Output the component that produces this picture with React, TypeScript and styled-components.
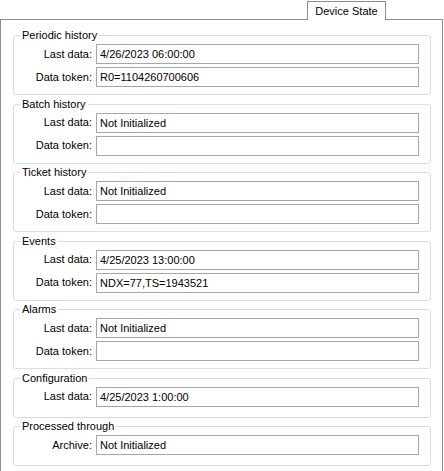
import React from "react";
import styled, { createGlobalStyle } from "styled-components";

const GlobalStyle = createGlobalStyle`
  html, body {
    margin: 0;
    padding: 0;
    background: #ffffff;
    overflow: hidden;
  }
  body {
    font-family: "Liberation Sans", Arial, sans-serif;
    font-size: 11px;
    color: #000000;
  }
`;

const Window = styled.div`
  width: 444px;
  height: 471px;
  display: flex;
  flex-direction: column;
  background: #ffffff;
`;

const TabStrip = styled.div`
  display: flex;
  justify-content: flex-end;
  padding: 1px 58px 0 0;
`;

const Tab = styled.div`
  position: relative;
  z-index: 1;
  box-sizing: border-box;
  width: 79px;
  height: 19px;
  margin-bottom: -1px;
  border: 1px solid #8d8d8d;
  border-bottom: none;
  background: #ffffff;
  display: flex;
  align-items: center;
  justify-content: center;
  line-height: 13px;
  padding-top: 1px;
`;

const TabPage = styled.div`
  flex: 1;
  margin-right: 1px;
  border: 1px solid #8d8d8d;
  border-bottom: none;
  padding: 9px 11px 0 12px;
  display: flex;
  flex-direction: column;
`;

const Group = styled.fieldset<{ $rows: number }>`
  margin: 0 0 2.5px 0;
  padding: 2px 11px ${(p) => (p.$rows === 1 ? 10 : 7)}px 0;
  border: 1px solid #dcdcdc;
  border-radius: 3px;
  display: flex;
  flex-direction: column;
  gap: 3px;
  min-width: 0;
`;

const Caption = styled.legend`
  margin-left: 6px;
  padding: 0 2px;
  line-height: 13px;
  font-size: 11px;
`;

const Row = styled.div`
  display: grid;
  grid-template-columns: 78px 1fr;
  column-gap: 4px;
  align-items: center;
`;

const FieldLabel = styled.label`
  text-align: right;
  line-height: 13px;
  white-space: nowrap;
`;

const Field = styled.input`
  box-sizing: border-box;
  width: 100%;
  height: 20px;
  margin: 0;
  padding: 0 3px;
  border: 1px solid #a6a6a6;
  border-radius: 0;
  background: #ffffff;
  font-family: inherit;
  font-size: 11px;
  color: #000000;
  outline: none;
`;

type FieldDef = { label: string; value: string };
type GroupDef = { title: string; fields: FieldDef[] };

const groups: GroupDef[] = [
  {
    title: "Periodic history",
    fields: [
      { label: "Last data:", value: "4/26/2023 06:00:00" },
      { label: "Data token:", value: "R0=1104260700606" },
    ],
  },
  {
    title: "Batch history",
    fields: [
      { label: "Last data:", value: "Not Initialized" },
      { label: "Data token:", value: "" },
    ],
  },
  {
    title: "Ticket history",
    fields: [
      { label: "Last data:", value: "Not Initialized" },
      { label: "Data token:", value: "" },
    ],
  },
  {
    title: "Events",
    fields: [
      { label: "Last data:", value: "4/25/2023 13:00:00" },
      { label: "Data token:", value: "NDX=77,TS=1943521" },
    ],
  },
  {
    title: "Alarms",
    fields: [
      { label: "Last data:", value: "Not Initialized" },
      { label: "Data token:", value: "" },
    ],
  },
  {
    title: "Configuration",
    fields: [{ label: "Last data:", value: "4/25/2023 1:00:00" }],
  },
  {
    title: "Processed through",
    fields: [{ label: "Archive:", value: "Not Initialized" }],
  },
];

const App = () => {
  return (
    <>
      <GlobalStyle />
      <Window>
        <TabStrip>
          <Tab>Device State</Tab>
        </TabStrip>
        <TabPage>
          {groups.map((g) => (
            <Group key={g.title} $rows={g.fields.length}>
              <Caption>{g.title}</Caption>
              {g.fields.map((f) => (
                <Row key={f.label}>
                  <FieldLabel>{f.label}</FieldLabel>
                  <Field readOnly value={f.value} />
                </Row>
              ))}
            </Group>
          ))}
        </TabPage>
      </Window>
    </>
  );
};

export default App;
